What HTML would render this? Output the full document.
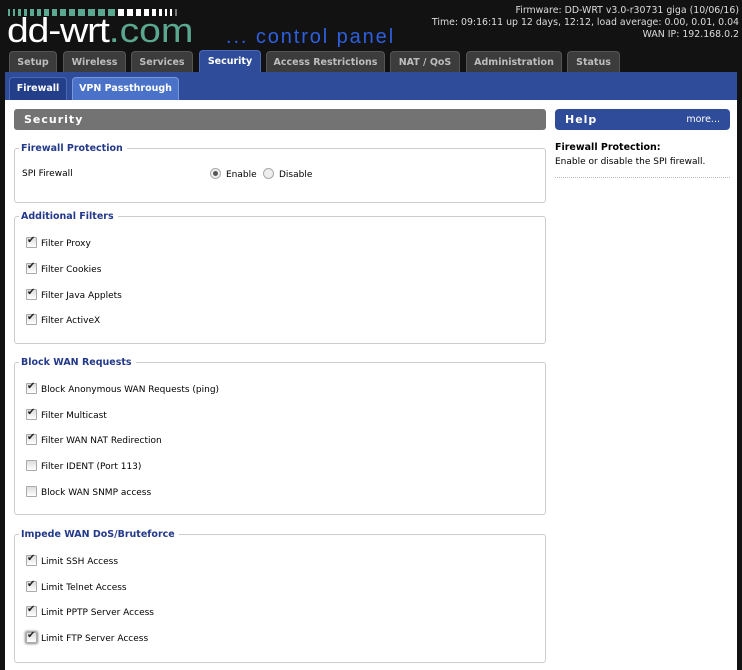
<!DOCTYPE html><html><head><style>
*{margin:0;padding:0;box-sizing:border-box}
body{width:742px;height:670px;background:#121212;font-family:"DejaVu Sans","Liberation Sans",sans-serif;font-size:9px;color:#000;position:relative;overflow:hidden}
.a{position:absolute;white-space:nowrap}
.bars{left:8px;top:9px;display:flex;gap:3px;height:7px}
.bars i{display:block;height:7px}
.logo{left:7px;top:14px;font-family:"Liberation Sans",sans-serif;font-size:34px;line-height:34px;color:#fff;letter-spacing:-1px;transform:scaleX(1.15);transform-origin:0 0}
.logo span{color:#5aa890;letter-spacing:0}
.cp{left:226px;top:27px;font-family:"Liberation Sans",sans-serif;font-size:20px;line-height:20px;color:#2d5fe0;letter-spacing:1.9px}
.info{right:3px;top:5px;text-align:right;color:#ddd;font-size:9.4px;line-height:12px}
.tab{top:51px;height:21px;background:#3c3c3c;color:#bdbdbd;font-weight:bold;font-size:9.5px;border-radius:4px 4px 0 0;text-align:center;line-height:21px;border:1px solid #555;border-bottom:none}
.tab.s{background:#2e4c9a;color:#fff;border-color:#4a68b8}
.bar{left:5px;top:72px;width:732px;height:28px;background:#2e4c9a}
.st{top:77px;height:23px;border-radius:4px 4px 0 0;color:#fff;font-weight:bold;font-size:9.5px;line-height:22px;text-align:center}
.main{left:5px;top:100px;width:732px;height:570px;background:#fff}
.hd{background:#737373;color:#fff;font-weight:bold;font-size:11px;letter-spacing:1px;line-height:21px;padding-left:10px;border-radius:3px}
fieldset{position:absolute;left:14px;width:532px;border:1px solid #ccc;border-radius:3px}
legend{color:#23398a;font-weight:bold;font-size:9.5px;padding:0 4px 0 2px;margin-left:4px}
.cb{position:absolute;left:26px;width:11px;height:11px;border:1px solid #aaa;background:linear-gradient(#ddd,#fff);border-radius:1px}
.cb.c::after{content:"✔";position:absolute;left:0;top:-3px;font-size:10px;color:#222}
.lb{position:absolute;left:41px;font-size:9px;white-space:nowrap}
.rd{width:11px;height:11px;border-radius:50%;border:1px solid #aaa;background:#eee;position:absolute}
</style></head><body>
<div class="a bars">
<i style="width:2px;background:#5aa890"></i><i style="width:2px;background:#5aa890"></i><i style="width:3px;background:#5aa890"></i><i style="width:3px;background:#5aa890"></i><i style="width:4px;background:#5aa890"></i><i style="width:4px;background:#5aa890"></i><i style="width:5px;background:#5aa890"></i><i style="width:5px;background:#5aa890"></i><i style="width:6px;background:#5aa890"></i><i style="width:6px;background:#5aa890"></i><i style="width:7px;background:#5aa890"></i><i style="width:7px;background:#5aa890"></i><i style="width:7px;background:#5aa890"></i><i style="width:7px;background:#5aa890"></i><i style="width:6px;background:#fff"></i><i style="width:6px;background:#fff"></i><i style="width:5px;background:#fff"></i><i style="width:5px;background:#fff"></i><i style="width:4px;background:#fff"></i><i style="width:3px;background:#fff"></i><i style="width:2px;background:#fff"></i><i style="width:2px;background:#fff"></i><i style="width:2px;background:#777"></i>
</div>
<div class="a logo">dd-wrt<span>.com</span></div>
<div class="a cp">... control panel</div>
<div class="a info">Firmware: DD-WRT v3.0-r30731 giga (10/06/16)<br>Time: 09:16:11 up 12 days, 12:12, load average: 0.00, 0.01, 0.04<br>WAN IP: 192.168.0.2</div>
<div class="a tab" style="left:9px;width:48px">Setup</div>
<div class="a tab" style="left:63px;width:63px">Wireless</div>
<div class="a tab" style="left:131px;width:62px">Services</div>
<div class="a tab s" style="left:199px;width:62px;top:50px;height:23px">Security</div>
<div class="a tab" style="left:266px;width:119px">Access Restrictions</div>
<div class="a tab" style="left:390px;width:70px">NAT / QoS</div>
<div class="a tab" style="left:466px;width:96px">Administration</div>
<div class="a tab" style="left:567px;width:53px">Status</div>
<div class="a bar"></div>
<div class="a st" style="left:9px;width:58px;background:#233f8a;border:1px solid #4a68b8;border-bottom:none">Firewall</div>
<div class="a st" style="left:72px;width:107px;background:#4a72c8;border:1px solid #7b98dc;border-bottom:none">VPN Passthrough</div>
<div class="a main"></div>
<div class="a hd" style="left:14px;top:109px;width:532px">Security</div>
<div class="a hd" style="left:555px;top:109px;width:175px;background:#2e4c9a;border-radius:4px">Help<span style="position:absolute;right:10px;font-weight:normal;font-size:9.5px;letter-spacing:0">more...</span></div>
<div class="a" style="left:555px;top:142px;font-weight:bold;font-size:9.5px">Firewall Protection:</div>
<div class="a" style="left:555px;top:157px;font-size:9px">Enable or disable the SPI firewall.</div>
<div class="a" style="left:555px;top:177px;width:175px;border-top:1px dotted #bbb"></div>

<fieldset style="top:143px;height:60px"><legend>Firewall Protection</legend></fieldset>
<div class="a" style="left:22px;top:169px">SPI Firewall</div>
<div class="rd" style="left:210px;top:168px"><div style="width:5px;height:5px;background:#555;border-radius:50%;margin:2px"></div></div>
<div class="a" style="left:226px;top:170px">Enable</div>
<div class="rd" style="left:263px;top:168px"></div>
<div class="a" style="left:279px;top:170px">Disable</div>

<fieldset style="top:211px;height:133px"><legend>Additional Filters</legend></fieldset>
<fieldset style="top:357px;height:158px"><legend>Block WAN Requests</legend></fieldset>
<fieldset style="top:529px;height:134px"><legend>Impede WAN DoS/Bruteforce</legend></fieldset>

<div class="cb c" style="top:237px"></div><div class="lb" style="top:239px">Filter Proxy</div>
<div class="cb c" style="top:263px"></div><div class="lb" style="top:265px">Filter Cookies</div>
<div class="cb c" style="top:289px"></div><div class="lb" style="top:291px">Filter Java Applets</div>
<div class="cb c" style="top:314px"></div><div class="lb" style="top:316px">Filter ActiveX</div>

<div class="cb c" style="top:383px"></div><div class="lb" style="top:385px">Block Anonymous WAN Requests (ping)</div>
<div class="cb c" style="top:409px"></div><div class="lb" style="top:411px">Filter Multicast</div>
<div class="cb c" style="top:434px"></div><div class="lb" style="top:436px">Filter WAN NAT Redirection</div>
<div class="cb" style="top:460px"></div><div class="lb" style="top:462px">Filter IDENT (Port 113)</div>
<div class="cb" style="top:486px"></div><div class="lb" style="top:488px">Block WAN SNMP access</div>

<div class="cb c" style="top:555px"></div><div class="lb" style="top:557px">Limit SSH Access</div>
<div class="cb c" style="top:581px"></div><div class="lb" style="top:583px">Limit Telnet Access</div>
<div class="cb c" style="top:606px"></div><div class="lb" style="top:608px">Limit PPTP Server Access</div>
<div class="cb c" style="top:632px;box-shadow:0 0 2px 1px #888"></div><div class="lb" style="top:634px">Limit FTP Server Access</div>
</body></html>
